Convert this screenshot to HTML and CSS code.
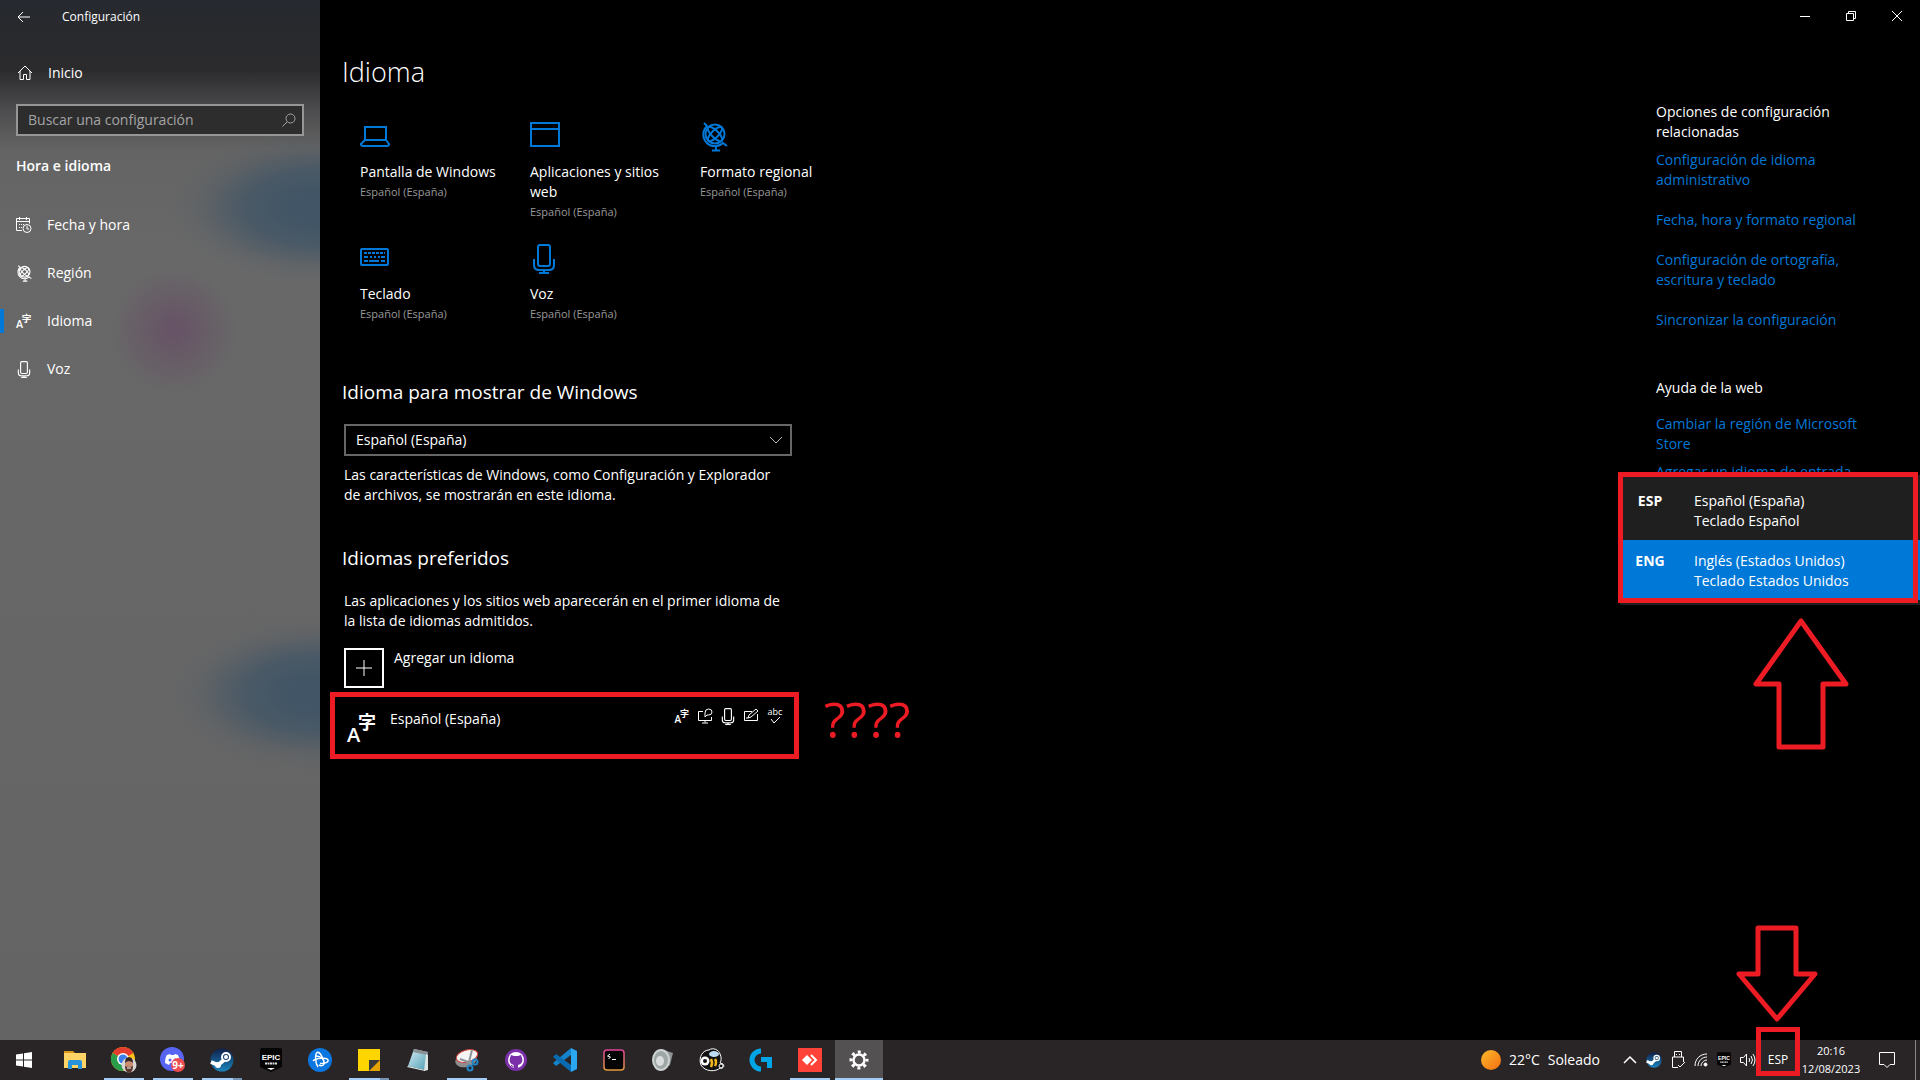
FILE: index.html
```html
<!DOCTYPE html>
<html lang="es">
<head>
  <meta charset="UTF-8">
  <meta name="viewport" content="width=device-width, initial-scale=1.0">
  <title>Configuración - Idioma</title>
  <link rel="stylesheet" href="styles.css">
</head>
<body>
  <!-- Iconos compartidos -->
  <svg class="sprite" aria-hidden="true">
    <symbol id="i-globe" viewBox="0 0 26 30">
      <g fill="none" stroke="currentColor" stroke-width="2">
        <circle cx="14" cy="12" r="9.500"/>
        <ellipse cx="14" cy="12" rx="9.500" ry="3.500" transform="rotate(45 14 12)"/>
        <ellipse cx="14" cy="12" rx="9.500" ry="3.500" transform="rotate(-45 14 12)"/>
        <path d="M3 1l3 3A11.500 11.500 0 0 0 22 21l4 3M15 24v4M11 28.500h8"/>
      </g>
    </symbol>
    <symbol id="i-mic" viewBox="0 0 24 30">
      <g fill="none" stroke="currentColor" stroke-width="2">
        <rect x="6" y="1" width="12" height="21" rx="2"/>
        <path d="M2 15v6q0 5 5 5h10q5 0 5-5v-6M12 26v3M7 29h10"/>
      </g>
    </symbol>
    <symbol id="i-steam" viewBox="0 0 24 24">
      <circle cx="12" cy="12" r="11.500" fill="url(#steam-fill)"/>
      <path d="M1 14l7 3 6-5" fill="none" stroke="#fff" stroke-width="4"/>
      <circle cx="8" cy="17" r="3" fill="#fff"/>
      <circle cx="16" cy="9" r="4" fill="#17406e" stroke="#fff" stroke-width="2"/>
      <circle cx="16" cy="9" r="2" fill="#fff"/>
    </symbol>
    <defs>
      <linearGradient id="steam-fill" x1="0" y1="0" x2="0" y2="1">
        <stop offset="0" stop-color="#10204a"/>
        <stop offset="1" stop-color="#1b85bd"/>
      </linearGradient>
      <linearGradient id="sun-fill" x1="0" y1="0" x2="1" y2="1">
        <stop offset="0" stop-color="#fbb92c"/>
        <stop offset="1" stop-color="#f36f10"/>
      </linearGradient>
      <linearGradient id="term-fill" x1="0" y1="0" x2="0" y2="1">
        <stop offset="0" stop-color="#e0439a"/>
        <stop offset="1" stop-color="#e39a3c"/>
      </linearGradient>
      <linearGradient id="pad-fill" x1="0" y1="0" x2="1" y2="1">
        <stop offset="0" stop-color="#d5eef4"/>
        <stop offset="1" stop-color="#4d9db5"/>
      </linearGradient>
    </defs>
  </svg>

  <div class="window">
    <aside class="sidebar">
      <div class="titlebar">
        <button class="back" type="button" aria-label="Atrás">
          <svg width="14" height="12" viewBox="0 0 14 12"><path d="M13 6H1M6 1 1 6l5 5" fill="none" stroke="currentColor"/></svg>
        </button>
        <span>Configuración</span>
      </div>

      <a class="nav-item home" href="#inicio">
        <svg width="16" height="16" viewBox="0 0 16 16"><path d="M1 8l7-7 7 7M3 6v8.500h3.500v-5h3v5H13V6" fill="none" stroke="currentColor"/></svg>
        Inicio
      </a>

      <div class="search">
        <input type="search" aria-label="Buscar una configuración" placeholder="Buscar una configuración">
        <svg width="14" height="14" viewBox="0 0 14 14"><g fill="none" stroke="currentColor"><circle cx="8.500" cy="5.500" r="4.500"/><path d="M5 9l-4.500 4.500"/></g></svg>
      </div>

      <h2 class="sidebar-title">Hora e idioma</h2>

      <nav>
        <a class="nav-item" href="#fecha">
          <svg width="16" height="16" viewBox="0 0 16 16"><g fill="none" stroke="currentColor"><path d="M6 13.500H.5v-12h13v5M.5 4.500h13M3.500 0v3M10.500 0v3"/><circle cx="11" cy="11.500" r="4"/><path d="M11 9v3h2"/><path d="M3 7.500h6M3 10.500h3" stroke-dasharray="1 1"/></g></svg>
          Fecha y hora
        </a>
        <a class="nav-item" href="#region">
          <svg width="16" height="17"><use href="#i-globe"/></svg>
          Región
        </a>
        <a class="nav-item active" href="#idioma">
          <svg width="16" height="16" viewBox="0 0 28 30"><text class="glyph-a" x="-1" y="29">A</text><text class="glyph-cjk" x="10" y="16">字</text></svg>
          Idioma
        </a>
        <a class="nav-item" href="#voz">
          <svg width="14" height="17"><use href="#i-mic"/></svg>
          Voz
        </a>
      </nav>
    </aside>

    <main class="main">
      <div class="window-controls">
        <button type="button" aria-label="Minimizar"><svg width="10" height="10" viewBox="0 0 10 10"><path d="M0 5.500h10" stroke="currentColor"/></svg></button>
        <button type="button" aria-label="Restaurar"><svg width="10" height="10" viewBox="0 0 10 10"><path d="M.5 2.500h7v7h-7zM2.500 2.500v-2h7v7h-2" fill="none" stroke="currentColor"/></svg></button>
        <button type="button" aria-label="Cerrar"><svg width="10" height="10" viewBox="0 0 10 10"><path d="M0 0l10 10M10 0 0 10" stroke="currentColor"/></svg></button>
      </div>

      <div class="content">
        <section class="settings">
          <h1>Idioma</h1>

          <div class="tiles">
            <a class="tile" href="#pantalla">
              <svg width="30" height="30" viewBox="0 0 30 30"><path d="M5 18V5h21v13M5 18 1 22q0 2 2 2h24q2 0 2-2l-3-4z" fill="none" stroke="currentColor" stroke-width="2"/></svg>
              <span>Pantalla de Windows</span>
              <small>Español (España)</small>
            </a>
            <a class="tile" href="#apps">
              <svg width="30" height="30" viewBox="0 0 30 30"><path d="M1 1h28v23H1zM1 7h28" fill="none" stroke="currentColor" stroke-width="2"/></svg>
              <span>Aplicaciones y sitios web</span>
              <small>Español (España)</small>
            </a>
            <a class="tile" href="#formato">
              <svg width="28" height="30"><use href="#i-globe"/></svg>
              <span>Formato regional</span>
              <small>Español (España)</small>
            </a>
            <a class="tile" href="#teclado">
              <svg width="30" height="30" viewBox="0 0 30 30"><g fill="none" stroke="currentColor" stroke-width="2"><rect x="1" y="5" width="27" height="16" rx="1"/><path d="M4 9h21" stroke-dasharray="3 1"/><path d="M4 13h4M10 13h2M14 13h2M18 13h2M21 13h4M4 17h4M9 17h10M21 17h4"/></g></svg>
              <span>Teclado</span>
              <small>Español (España)</small>
            </a>
            <a class="tile" href="#voz-idioma">
              <svg width="28" height="30"><use href="#i-mic"/></svg>
              <span>Voz</span>
              <small>Español (España)</small>
            </a>
          </div>

          <h2><label for="display-language">Idioma para mostrar de Windows</label></h2>
          <div class="select">
            <select id="display-language">
              <option>Español (España)</option>
            </select>
            <svg width="12" height="8" viewBox="0 0 12 8"><path d="M0 1l6 6 6-6" fill="none" stroke="currentColor"/></svg>
          </div>
          <p class="help">Las características de Windows, como Configuración y Explorador de archivos, se mostrarán en este idioma.</p>

          <h2 class="preferred">Idiomas preferidos</h2>
          <p class="intro">Las aplicaciones y los sitios web aparecerán en el primer idioma de la lista de idiomas admitidos.</p>

          <button class="add-language" type="button">
            <span class="plus"><svg width="16" height="16" viewBox="0 0 16 16"><path d="M0 8h16M8 0v16" stroke="currentColor"/></svg></span>
            Agregar un idioma
          </button>

          <div class="language">
            <svg class="language-icon" width="28" height="30" viewBox="0 0 28 30"><text class="glyph-a" x="-1" y="29">A</text><text class="glyph-cjk" x="10" y="16">字</text></svg>
            <span class="language-name">Español (España)</span>
            <div class="features">
              <svg width="14" height="16" viewBox="0 0 28 30"><text class="glyph-a" x="-1" y="29">A</text><text class="glyph-cjk" x="10" y="16">字</text></svg>
              <svg width="16" height="16" viewBox="0 0 16 16"><g fill="none" stroke="currentColor"><path d="M6 3.500H1.500v9h13V9M8 12.500v2M5 15h6"/><path d="M8 7V5q0-4 3.500-4T15 4t-3.500 3H10L8 9z"/></g></svg>
              <svg width="14" height="17"><use href="#i-mic"/></svg>
              <svg width="16" height="16" viewBox="0 0 16 16"><path d="M9 3.500H1.500v9h13V6M5 10l1-3 7-6 2 2-7 6zM3 10h2" fill="none" stroke="currentColor"/></svg>
              <svg width="16" height="18" viewBox="0 0 16 18"><text class="glyph-abc" x="8" y="8" text-anchor="middle">abc</text><path d="M4 12l3 4 6-6" fill="none" stroke="currentColor"/></svg>
            </div>
            <span class="question">????</span>
          </div>
        </section>

        <aside class="related">
          <h3>Opciones de configuración relacionadas</h3>
          <ul class="links">
            <li><a href="#admin">Configuración de idioma administrativo</a></li>
            <li><a href="#formato">Fecha, hora y formato regional</a></li>
            <li><a href="#ortografia">Configuración de ortografía, escritura y teclado</a></li>
            <li><a href="#sync">Sincronizar la configuración</a></li>
          </ul>
          <h3 class="web-help">Ayuda de la web</h3>
          <ul class="links help-links">
            <li><a href="#store">Cambiar la región de Microsoft Store</a></li>
            <li><a href="#entrada">Agregar un idioma de entrada</a></li>
          </ul>
        </aside>
      </div>
    </main>
  </div>

  <!-- Selector de idioma de entrada -->
  <div class="flyout">
    <button class="input-option" type="button">
      <strong>ESP</strong>
      <span>Español (España)<br>Teclado Español</span>
    </button>
    <button class="input-option selected" type="button">
      <strong>ENG</strong>
      <span>Inglés (Estados Unidos)<br>Teclado Estados Unidos</span>
    </button>
    <svg class="arrow-up" width="96" height="134" viewBox="0 0 96 134"><path d="M48 4 3 67h23v63h44V67h23z"/></svg>
  </div>

  <footer class="taskbar">
    <div class="apps">
      <button class="app start" type="button" aria-label="Inicio">
        <svg width="16" height="16" viewBox="0 0 16 16"><path d="M0 2.500 7 1.500v6H0zM8 1.300 16 0v7.500H8zM0 8.500h7v6L0 13.500zM8 8.500h8V16l-8-1.300z" fill="#fff"/></svg>
      </button>
      <button class="app" type="button" aria-label="Explorador de archivos">
        <svg width="22" height="20" viewBox="0 0 22 20"><path d="M0 1h9l2 2H0z" fill="#d99a1c"/><path d="M0 3h22v15H0z" fill="#ffd466"/><path d="M4 19v-7q0-2 2-2h10q2 0 2 2v7h-4v-4H8v4z" fill="#2793db"/></svg>
      </button>
      <button class="app open" type="button" aria-label="Google Chrome">
        <svg width="26" height="26" viewBox="0 0 26 26">
          <circle cx="12" cy="12" r="12" fill="#fbc116"/>
          <path d="M12 12 1.600 6A12 12 0 0 1 22.400 6z" fill="#e33b2e"/>
          <path d="M12 12 1.600 6A12 12 0 0 0 12 24l4-8z" fill="#2a9d4a"/>
          <circle cx="12" cy="12" r="6" fill="#fff"/><circle cx="12" cy="12" r="4.500" fill="#3b7ded"/>
          <circle cx="18" cy="18" r="7.500" fill="#d8d6d4"/>
          <ellipse cx="18" cy="18" rx="4" ry="6" fill="#c98d72"/>
          <path d="M14 16q0-6 4-6t4 6q-4-4-8 0z" fill="#33241f"/>
          <path d="M14 19q4 2 8 0 0 6-4 7-4-1-4-7z" fill="#5b3a2d"/><path d="M16 21h4" stroke="#fff"/>
        </svg>
      </button>
      <button class="app open" type="button" aria-label="Discord">
        <svg width="26" height="26" viewBox="0 0 26 26">
          <circle cx="12" cy="12" r="12" fill="#5865f2"/>
          <path d="M5 16c0-4 1-7 2-8l3-1 1 1h3l1-1 3 1c1 2 2 5 2 8l-4 2-1-2H10l-1 2z" fill="#fff"/>
          <circle cx="10" cy="13" r="1.500" fill="#5865f2"/><circle cx="15" cy="13" r="1.500" fill="#5865f2"/>
          <circle cx="18" cy="18" r="7" fill="#ed4c50"/>
          <text class="glyph-badge" x="18" y="22" text-anchor="middle">9+</text>
        </svg>
      </button>
      <button class="app open multiple" type="button" aria-label="Steam">
        <svg width="24" height="24"><use href="#i-steam"/></svg>
      </button>
      <button class="app" type="button" aria-label="Epic Games">
        <svg width="22" height="24" viewBox="0 0 22 24"><path d="M2 0h18q2 0 2 2v17l-11 5-11-5V2q0-2 2-2z" fill="#050505"/><text class="glyph-epic" x="11" y="12" text-anchor="middle">EPIC</text><path d="M5 15.500h12" stroke="#ddd" stroke-width="2" stroke-dasharray="2 .5"/><path d="M7 20h8l-4 2z" fill="#fff"/></svg>
      </button>
      <button class="app" type="button" aria-label="Battle.net">
        <svg width="24" height="24" viewBox="0 0 24 24"><circle cx="12" cy="12" r="12" fill="#0b76e0"/><g fill="none" stroke="#fff" stroke-width="1.500"><path d="M10 19C7 15 7 6 9 4.500c3-1 5 4 6 7"/><path d="M5 13c3-3 14-4 15-1s-5 3.500-8 3.500"/><path d="M8 8c5 0 9 4 8 8-1 2-3 2-5 1"/></g></svg>
      </button>
      <button class="app open multiple" type="button" aria-label="Notas rápidas">
        <svg width="22" height="22" viewBox="0 0 22 22"><path d="M0 0h22v22H0z" fill="#ffd500"/><path d="M11 11h11v11H11z" fill="#e3a300"/><path d="M11 11h11L11 22z" fill="#383838"/></svg>
      </button>
      <button class="app" type="button" aria-label="Bloc de notas">
        <svg width="24" height="24" viewBox="0 0 24 24"><path d="M8 1l14 3-3 18-17-4z" fill="url(#pad-fill)"/><path d="M8 1l14 3-1 3L7 4z" fill="#8b9192"/><path d="M20 6l2 1v15l-4 1z" fill="#dce4e4"/><path d="M2 18l17 4v1L1 19z" fill="#e4efef"/></svg>
      </button>
      <button class="app open" type="button" aria-label="Recortes">
        <svg width="26" height="24" viewBox="0 0 26 24"><ellipse cx="12" cy="12" rx="11" ry="7" fill="#8d8d8d" transform="rotate(-15 12 12)"/><ellipse cx="13" cy="8" rx="11" ry="6" fill="#f4f4f4" stroke="#d3423d" transform="rotate(-15 13 8)"/><path d="M18 2l-3 12M6 11l11 4" stroke="#8a9499" stroke-width="2"/><g fill="none" stroke="#2185c7" stroke-width="2"><circle cx="21" cy="14" r="2.500"/><circle cx="16" cy="20" r="2.500"/></g></svg>
      </button>
      <button class="app" type="button" aria-label="GitHub Desktop">
        <svg width="22" height="22" viewBox="0 0 22 22"><circle cx="11" cy="11" r="11" fill="#7b2fa8"/><circle cx="11" cy="11" r="8" fill="#fff"/><path d="M9 20v-4c-4-1-5-4-4-7l1-3 3 1h4l3-1 1 3c1 3 0 6-4 7v4z" fill="#7b2fa8"/><path d="M9 17q-2 1-3-1" fill="none" stroke="#7b2fa8"/></svg>
      </button>
      <button class="app" type="button" aria-label="Visual Studio Code">
        <svg width="24" height="24" viewBox="0 0 24 24"><path d="M18 0v7L3 18l-3-3z" fill="#1583cc"/><path d="M0 9l3-3 15 11v7z" fill="#0b6bb0"/><path d="M18 0l6 3v18l-6 3z" fill="#2aa7f0"/></svg>
      </button>
      <button class="app" type="button" aria-label="Terminal">
        <svg width="22" height="22" viewBox="0 0 22 22"><rect x="1" y="1" width="20" height="20" rx="3" fill="#050505" stroke="url(#term-fill)" stroke-width="1.500"/><path d="M7 5 4.500 7l3 1-2 2M9 10.500h4" fill="none" stroke="#fff"/></svg>
      </button>
      <button class="app" type="button" aria-label="Mezclador de volumen">
        <svg width="24" height="24" viewBox="0 0 24 24"><path d="M10 1l12 4-3 12-7 6z" fill="#8d9292"/><ellipse cx="10" cy="12" rx="9" ry="11" fill="#cdd2d2"/><ellipse cx="10" cy="12" rx="7" ry="9" fill="#9fa6a6"/><ellipse cx="9" cy="13" rx="4" ry="5" fill="#d9dddd"/></svg>
      </button>
      <button class="app" type="button" aria-label="Beekeeper">
        <svg width="26" height="24" viewBox="0 0 26 24"><path d="M2 17C-1 9 4 2 10 2c4-3 10 0 11 4 2 4 1 7 0 9l3 1c2 2 0 5-3 4-4 4-15 4-19-3z" fill="#111" stroke="#fff"/><ellipse cx="15" cy="6" rx="5" ry="3" fill="#bddcf4"/><path d="M12 11q2 4 0 8M16 11q2 3 0 7" fill="none" stroke="#f5b51c" stroke-width="2.500"/><circle cx="6" cy="13" r="4.500" fill="#fff"/><circle cx="6" cy="13" r="2" fill="#111"/><circle cx="22" cy="18" r="2" fill="none" stroke="#fff"/></svg>
      </button>
      <button class="app" type="button" aria-label="Logitech G HUB">
        <svg width="24" height="24" viewBox="0 0 24 24"><path d="M12 3a9 9 0 1 0 0 18" fill="none" stroke="#00a5e5" stroke-width="5"/><path d="M12 9h11v11h-5v-6h-6z" fill="#00a5e5"/></svg>
      </button>
      <button class="app open" type="button" aria-label="AnyDesk">
        <svg width="24" height="24" viewBox="0 0 24 24"><path d="M0 0h24v24H0z" fill="#ff4338"/><path d="M4 12l5-5 5 5-5 5z" fill="#fff"/><path d="M13 7l5 5-5 5" fill="none" stroke="#fff" stroke-width="2"/></svg>
      </button>
      <button class="app current" type="button" aria-label="Configuración">
        <svg width="20" height="20" viewBox="0 0 20 20"><circle cx="10" cy="10" r="5.500" fill="none" stroke="#fff" stroke-width="2.500"/><circle cx="10" cy="10" r="8" fill="none" stroke="#fff" stroke-width="3" stroke-dasharray="3 3.283" stroke-dashoffset="1.500"/></svg>
      </button>
    </div>

    <div class="tray">
      <button class="weather" type="button">
        <svg width="20" height="20" viewBox="0 0 20 20"><circle cx="10" cy="10" r="10" fill="url(#sun-fill)"/></svg>
        <span>22°C</span>
        <span>Soleado</span>
      </button>
      <div class="tray-icons">
        <svg width="14" height="8" viewBox="0 0 14 8"><path d="M1 7l6-6 6 6" fill="none" stroke="currentColor" stroke-width="1.500"/></svg>
        <svg width="16" height="16"><use href="#i-steam"/></svg>
        <svg width="14" height="18" viewBox="0 0 14 18"><path d="M3.500 6V.5h7V6M1.500 16.500V6h11v5M1.500 16.500H7M5 3.500h1M8 3.500h1M7 14l2 2 5-5" fill="none" stroke="currentColor"/></svg>
        <svg width="14" height="14" viewBox="0 0 14 14"><g fill="none" stroke="currentColor"><path d="M1 13C1 6 6 1 13 1M4 13c0-5 4-9 9-9M7 13c0-3 3-6 6-6"/><circle cx="11.500" cy="11.500" r="1.500" fill="currentColor"/></g></svg>
        <svg width="14" height="16" viewBox="0 0 22 24"><path d="M2 0h18q2 0 2 2v17l-11 5-11-5V2q0-2 2-2z" fill="#050505"/><text class="glyph-epic" x="11" y="12" text-anchor="middle">EPIC</text><path d="M5 15.500h12" stroke="#ddd" stroke-width="2" stroke-dasharray="2 .5"/><path d="M7 20h8l-4 2z" fill="#fff"/></svg>
        <svg width="16" height="14" viewBox="0 0 16 14"><path d="M.5 4.500h3l3-3.500v12l-3-3.500h-3zM9 5q1.500 2 0 4M11 3q3 4 0 8M13 1q4 6 0 12" fill="none" stroke="currentColor"/></svg>
      </div>
      <div class="input-language">
        <button type="button">ESP</button>
        <svg class="arrow-down" width="82" height="100" viewBox="0 0 82 100"><path d="M22 4h38v46h19L41 95 3 50h19z"/></svg>
      </div>
      <button class="clock" type="button">20:16<br>12/08/2023</button>
      <button class="notifications" type="button" aria-label="Notificaciones">
        <svg width="16" height="17" viewBox="0 0 16 17"><path d="M.5.5h15v12H11l-3 3-3-3H.5z" fill="none" stroke="currentColor"/></svg>
      </button>
    </div>
  </footer>
</body>
</html>
```
FILE: styles.css
```css
:root {
  --accent: #0078d7;
  --red: #ed1c24;
  --underline: #a4cdf5;
  --muted: #999;
}

* {
  box-sizing: border-box;
}

body {
  margin: 0;
  min-height: 100vh;
  display: flex;
  flex-direction: column;
  position: relative;
  background: #000;
  color: #fff;
  font-family: "Open Sans", "Noto Sans CJK JP", sans-serif;
  font-size: 14px;
  line-height: 20px;
}

button {
  padding: 0;
  border: 0;
  background: none;
  color: inherit;
  font: inherit;
}

a {
  color: inherit;
  text-decoration: none;
}

svg {
  display: block;
  flex-shrink: 0;
  overflow: visible;
}

h1, h2, h3, p, ul {
  margin: 0;
  padding: 0;
}

.sprite {
  position: absolute;
  width: 0;
  height: 0;
}

.window {
  flex: 1;
  display: flex;
}

/* Panel izquierdo */
.sidebar {
  width: 320px;
  flex-shrink: 0;
  background:
    radial-gradient(ellipse 150px 76px at 320px 208px, #415566 20%, rgba(65, 85, 102, 0.75) 50%, rgba(65, 85, 102, 0.15) 80%, transparent 100%),
    radial-gradient(ellipse 150px 76px at 320px 694px, #415566 20%, rgba(65, 85, 102, 0.75) 50%, rgba(65, 85, 102, 0.15) 80%, transparent 100%),
    radial-gradient(circle 62px at 174px 330px, #675466 10%, rgba(103, 84, 102, 0) 100%),
    linear-gradient(#26292f 0, #2b2b2d 70px, #4c4c4e 110px, #646464 150px, #686868 260px, #646464 100%);
}

.titlebar {
  height: 34px;
  display: flex;
  align-items: center;
  font-size: 12px;
}

.back {
  width: 48px;
  height: 32px;
  display: grid;
  place-items: center;
  margin-right: 14px;
}

.nav-item {
  height: 48px;
  padding-left: 16px;
  display: flex;
  align-items: center;
  position: relative;
}

.nav-item svg {
  width: 16px;
  margin-right: 15px;
}

.home {
  height: 40px;
  margin: 19px 0 11px;
  padding-left: 17px;
}

.nav-item.active::before {
  content: "";
  position: absolute;
  left: 0;
  width: 4px;
  height: 24px;
  background: var(--accent);
}

.search {
  height: 32px;
  margin: 0 16px;
  padding: 0 6px 0 10px;
  display: flex;
  align-items: center;
  border: 2px solid #969696;
  background: #2d2d2e;
  color: #a5a5a5;
}

.search input {
  flex: 1;
  min-width: 0;
  padding: 0;
  border: 0;
  outline: 0;
  background: none;
  color: #fff;
  font: inherit;
}

.search input::placeholder {
  color: #a5a5a5;
  opacity: 1;
}

.sidebar-title {
  margin: 20px 16px 25px;
  font-size: 14px;
  font-weight: 600;
}

/* Contenido */
.main {
  flex: 1;
  min-width: 0;
}

.window-controls {
  height: 32px;
  display: flex;
  justify-content: flex-end;
}

.window-controls button {
  width: 46px;
  display: grid;
  place-items: center;
}

.content {
  display: flex;
  justify-content: space-between;
  padding: 20px 32px 0 24px;
}

.settings {
  width: 448px;
}

.settings h1,
.settings h2 {
  margin-left: -2px;
}

h1 {
  font-size: 27px;
  font-weight: 300;
  line-height: 40px;
}

.tiles {
  display: grid;
  grid-template-columns: repeat(3, 150px);
  gap: 22px 20px;
  margin: 30px 0 54px;
  padding-left: 16px;
}

.tile {
  display: flex;
  flex-direction: column;
}

.tile svg {
  margin-bottom: 10px;
  color: var(--accent);
}

.tile small {
  color: var(--muted);
  font-size: 11px;
}

.settings h2 {
  font-size: 19px;
  font-weight: 400;
  line-height: 28px;
}

.select {
  position: relative;
  margin-top: 18px;
}

.select select {
  display: block;
  width: 100%;
  height: 32px;
  padding: 0 10px;
  appearance: none;
  border: 2px solid #666;
  border-radius: 0;
  background: #000;
  color: #fff;
  font: inherit;
}

.select svg {
  position: absolute;
  right: 10px;
  top: 12px;
  color: #bbb;
  pointer-events: none;
}

.help {
  margin-top: 9px;
  padding-right: 8px;
}

.settings .preferred {
  margin-top: 39px;
}

.intro {
  margin: 19px 0 17px;
}

.add-language {
  display: flex;
  gap: 10px;
}

.plus {
  width: 40px;
  height: 40px;
  display: grid;
  place-items: center;
  border: 2px solid #fff;
}

.language {
  position: relative;
  height: 67px;
  margin: 4px -7px 0 -14px;
  padding: 12px 11px 0 13px;
  display: flex;
  border: 5px solid var(--red);
}

.language-icon {
  margin: 4px 14px 0 0;
}

.features {
  margin-left: auto;
  height: 14px;
  display: flex;
  align-items: center;
  gap: 8px;
}

.question {
  position: absolute;
  left: 100%;
  margin-left: 30px;
  color: var(--red);
  font-size: 50px;
}

.related {
  width: 232px;
  padding-top: 50px;
}

.related h3 {
  font-size: 14px;
  font-weight: 400;
}

.related .web-help {
  margin: 48px 0 16px;
}

.links {
  display: flex;
  flex-direction: column;
  gap: 20px;
  margin-top: 8px;
  list-style: none;
  color: var(--accent);
}

.help-links {
  gap: 8px;
}

/* Selector de idioma sobre la ventana */
.flyout {
  position: absolute;
  top: 475px;
  right: 0;
  width: 300px;
  padding: 5px 0;
  background: #1f1f1f;
}

.flyout::after {
  content: "";
  position: absolute;
  inset: -3px 2px 2px -2px;
  border: 5px solid var(--red);
  pointer-events: none;
}

.input-option {
  width: 100%;
  height: 60px;
  padding: 11px 0 0 4px;
  display: flex;
  text-align: left;
}

.input-option strong {
  width: 52px;
  margin-right: 18px;
  font-weight: 700;
  text-align: center;
}

.input-option.selected {
  background: var(--accent);
}

.arrow-up,
.arrow-down {
  position: absolute;
  fill: none;
  stroke: var(--red);
  stroke-width: 5;
  stroke-linejoin: round;
}

.arrow-up {
  top: 142px;
  right: 71px;
}

/* Barra de tareas */
.taskbar {
  height: 40px;
  display: flex;
  justify-content: space-between;
  background: #292526;
}

.apps {
  display: flex;
  gap: 1px;
}

.app {
  position: relative;
  width: 48px;
  display: grid;
  place-items: center;
}

.start {
  margin-right: 2px;
}

.open::after,
.current::after {
  content: "";
  position: absolute;
  left: 4px;
  right: 4px;
  bottom: 0;
  height: 2px;
  background: var(--underline);
}

.multiple::after {
  background: linear-gradient(90deg, var(--underline) 31px, #7695b3 31px);
}

.current {
  background: #545153;
}

.current::after {
  left: 0;
  right: 0;
}

.tray {
  display: flex;
  align-items: stretch;
  padding-right: 4px;
}

.weather {
  display: flex;
  align-items: center;
  gap: 8px;
  margin-right: 23px;
}

.tray-icons {
  display: flex;
  align-items: center;
  gap: 9px;
}

.input-language {
  position: relative;
  display: flex;
  width: 44px;
  font-size: 12px;
}

.input-language button {
  flex: 1;
}

.input-language::after {
  content: "";
  position: absolute;
  inset: -13px 0 4px;
  border: 5px solid var(--red);
  pointer-events: none;
}

.arrow-down {
  left: -20px;
  bottom: 56px;
}

.clock {
  width: 62px;
  font-size: 11px;
  line-height: 18px;
}

.notifications {
  width: 54px;
  padding-right: 4px;
  display: grid;
  place-items: center;
  border-right: 1px solid #888;
}

/* Texto dentro de los iconos */
.glyph-a {
  fill: currentColor;
  font: 600 20px "Open Sans", sans-serif;
}

.glyph-cjk {
  fill: currentColor;
  font: 700 18px "Noto Sans CJK JP", sans-serif;
}

.glyph-epic {
  fill: #fff;
  font: 700 8px "Liberation Sans Narrow", "Liberation Sans", sans-serif;
}

.glyph-badge {
  fill: #fff;
  font: 700 10px "Open Sans", sans-serif;
}

.glyph-abc {
  fill: currentColor;
  font: 400 9px "Open Sans", sans-serif;
}
```
